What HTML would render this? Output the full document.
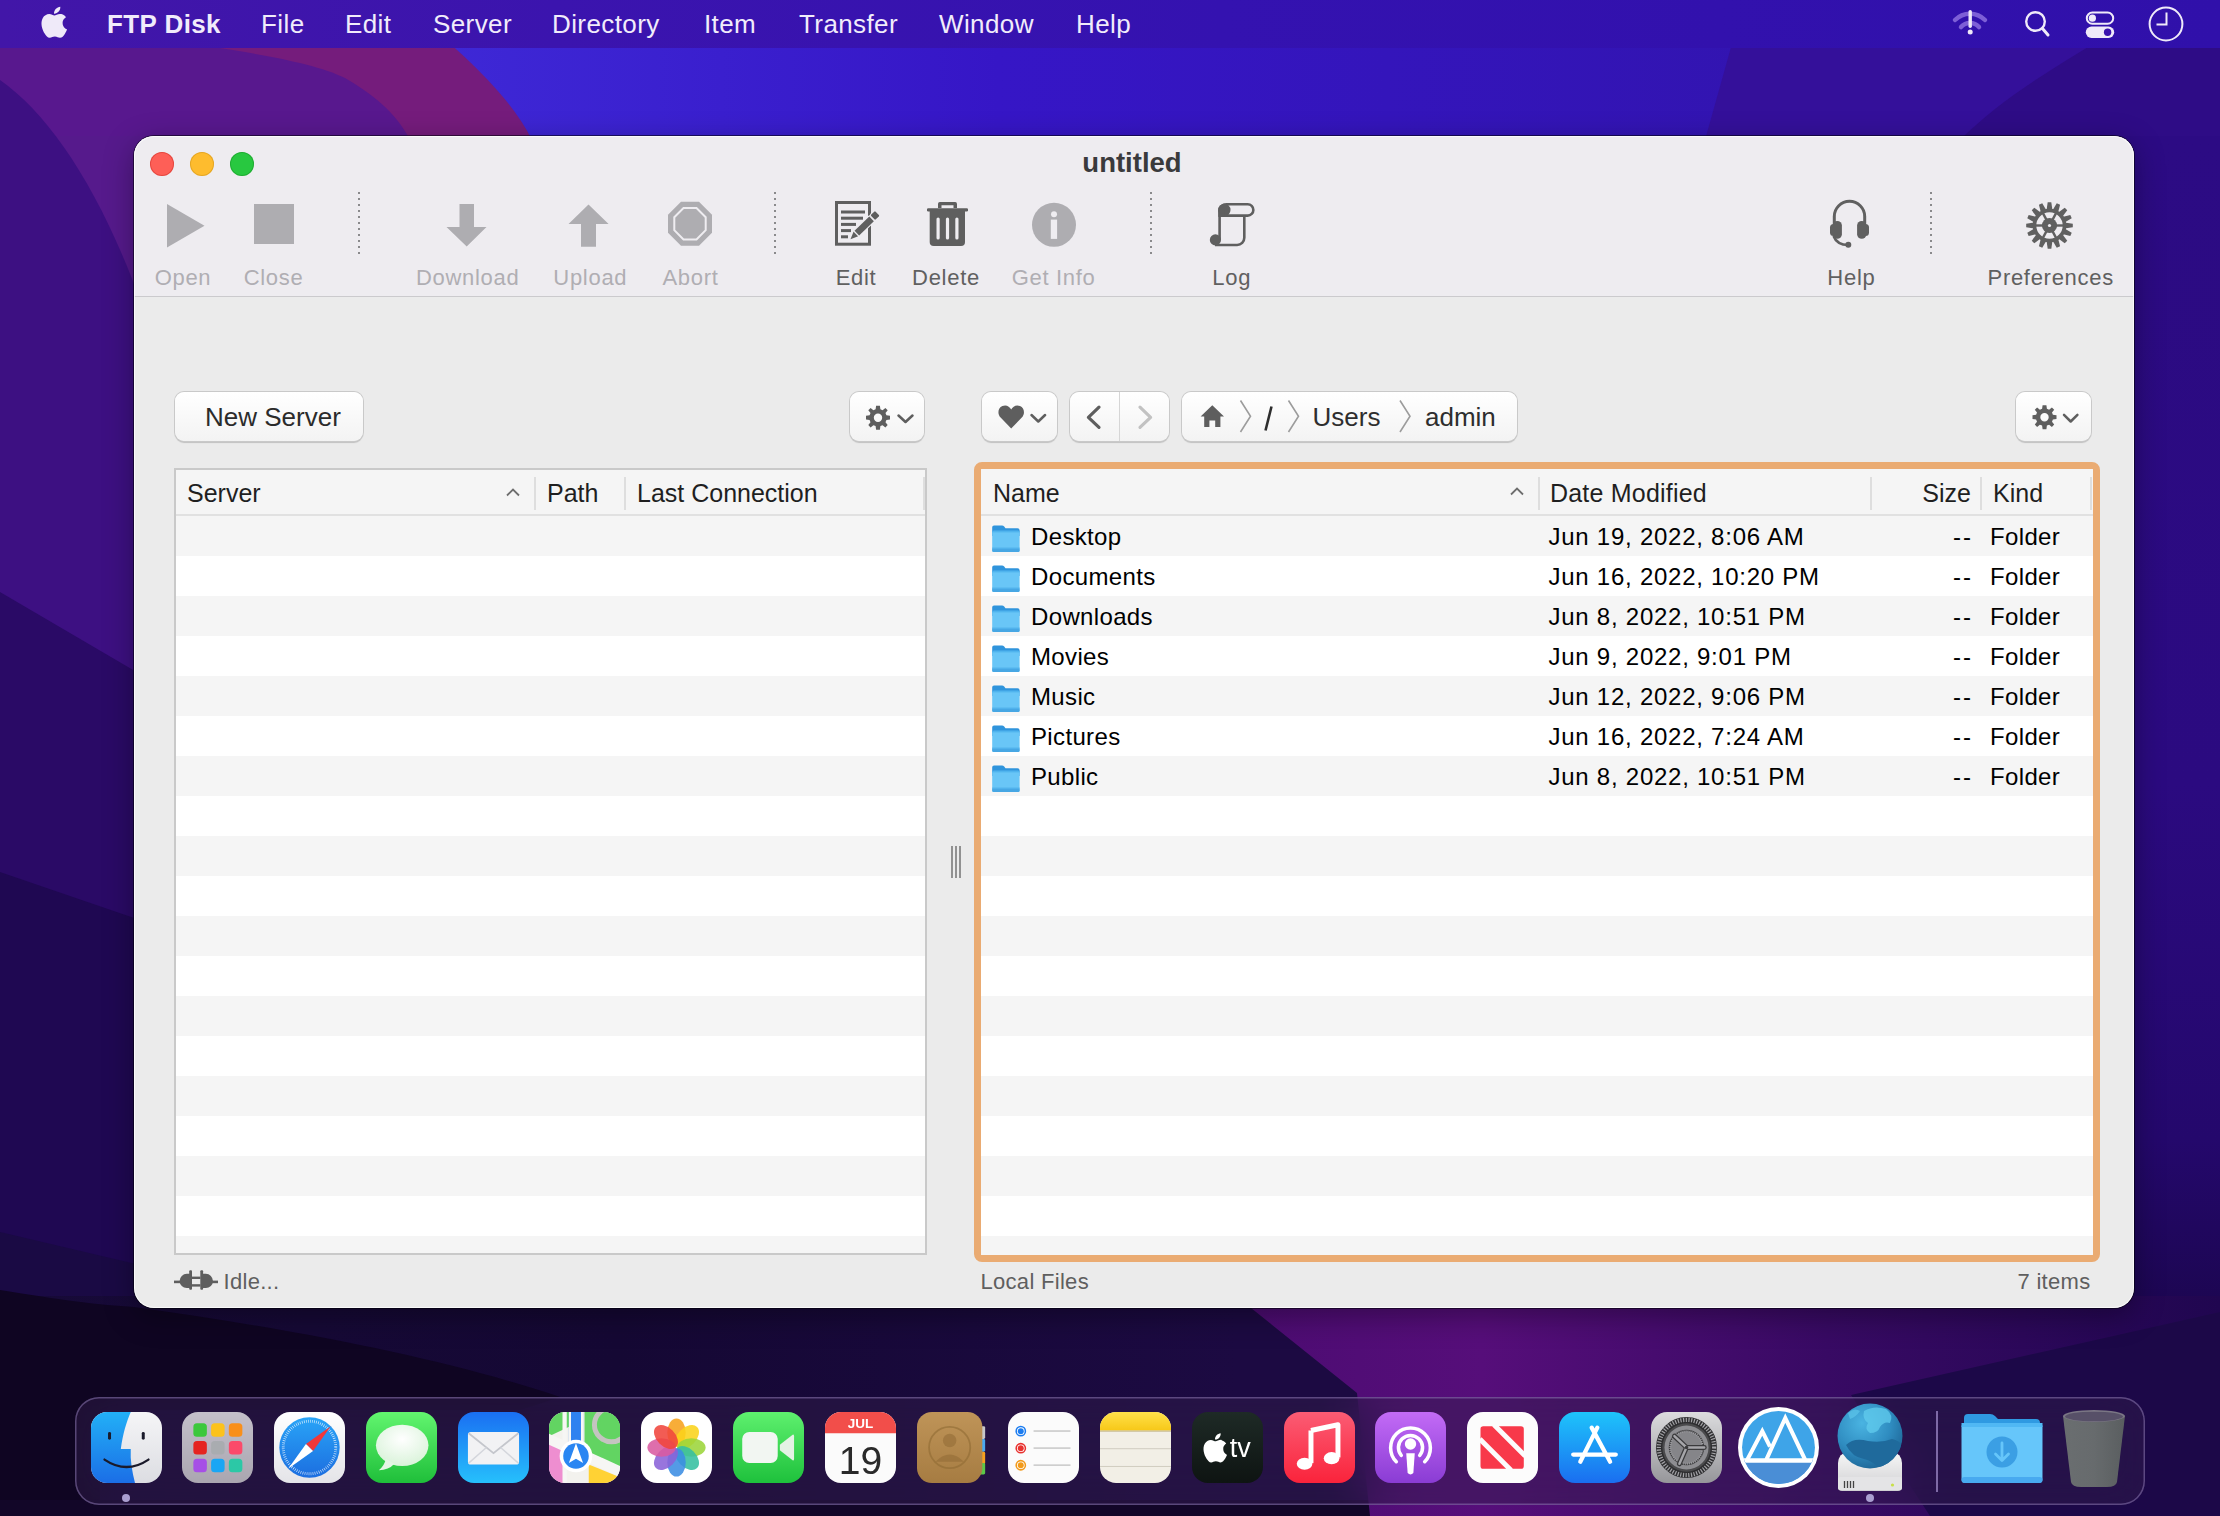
<!DOCTYPE html>
<html><head><meta charset="utf-8">
<style>
*{box-sizing:border-box;margin:0;padding:0}
html,body{width:2220px;height:1516px;overflow:hidden;background:#2a0c80}
body{position:relative;font-family:"Liberation Sans",sans-serif}
.abs{position:absolute}
.t{position:absolute;white-space:nowrap;line-height:1}
#menubar .t{color:#f1ecfb;font-size:26px;top:11px;letter-spacing:.4px}
#win{position:absolute;left:134px;top:136px;width:2000px;height:1172px;border-radius:20px;overflow:hidden;background:#ebebeb;box-shadow:0 0 0 1px rgba(0,0,10,.55),0 8px 30px rgba(0,0,0,.35)}
#tb{position:absolute;left:0;top:0;width:2000px;height:161px;background:#eeecf0;border-bottom:1px solid #cbcacd}
.lbl{position:absolute;top:130.5px;font-size:22px;line-height:1;white-space:nowrap;letter-spacing:.7px;transform:translateX(-50%)}
.dis{color:#b0aeb3}
.en{color:#606060}
.sep{position:absolute;top:56px;width:2px;height:64px;background-image:linear-gradient(#8a8a8c 0,#8a8a8c 2px,transparent 2px,transparent 6px);background-size:2px 6px;background-repeat:repeat-y}
.btn{position:absolute;height:49px;border-radius:9px;background:linear-gradient(#ffffff,#f3f3f3);box-shadow:0 0 0 1px #c9c9c9,0 1.5px 1px rgba(0,0,0,.18)}
.tbl{position:absolute;background:#fff}
.hdr{position:absolute;left:0;top:0;right:0;height:47px;background:#f5f5f5;border-bottom:2px solid #e2e2e2}
.ht{position:absolute;top:11px;font-size:25px;line-height:1;color:#1f1f1f;white-space:nowrap}
.hdiv{position:absolute;top:7px;width:2px;height:33px;background:#dedede}
.caret{position:absolute;top:18px;width:16px;height:10px}
.rt{position:absolute;font-size:24px;line-height:1;color:#000;white-space:nowrap;letter-spacing:.35px}
.dk{position:absolute;top:1412px;width:71px;height:71px;border-radius:16px;overflow:hidden}
</style></head>
<body>
<!-- WALLPAPER -->
<svg class="abs" style="left:0;top:0" width="2220" height="1516" viewBox="0 0 2220 1516">
  <defs>
    <linearGradient id="gBlue" x1="0" y1="0" x2="2220" y2="0" gradientUnits="userSpaceOnUse">
      <stop offset="0.2" stop-color="#3e28d6"/>
      <stop offset="0.45" stop-color="#3616c6"/>
      <stop offset="0.8" stop-color="#3214b0"/>
    </linearGradient>
    <linearGradient id="gLeft" x1="0" y1="136" x2="0" y2="1316" gradientUnits="userSpaceOnUse">
      <stop offset="0" stop-color="#4a148a"/>
      <stop offset=".3" stop-color="#3a1080"/>
      <stop offset=".55" stop-color="#2c0c6a"/>
      <stop offset=".75" stop-color="#1e0848"/>
      <stop offset="1" stop-color="#130529"/>
    </linearGradient>
    <linearGradient id="gRight" x1="0" y1="136" x2="0" y2="1316" gradientUnits="userSpaceOnUse">
      <stop offset="0" stop-color="#2c0b84"/>
      <stop offset=".55" stop-color="#2b0a80"/>
      <stop offset=".85" stop-color="#24086c"/>
      <stop offset="1" stop-color="#1c0650"/>
    </linearGradient>
    <linearGradient id="gMag" x1="1236" y1="0" x2="2220" y2="0" gradientUnits="userSpaceOnUse">
      <stop offset="0" stop-color="#4c0c72"/>
      <stop offset=".25" stop-color="#560e7a"/>
      <stop offset=".6" stop-color="#380a64"/>
      <stop offset="1" stop-color="#200650"/>
    </linearGradient>
    <linearGradient id="gBot" x1="0" y1="0" x2="1236" y2="0" gradientUnits="userSpaceOnUse">
      <stop offset="0" stop-color="#170a38"/>
      <stop offset=".5" stop-color="#150834"/>
      <stop offset="1" stop-color="#1c0a42"/>
    </linearGradient>
  </defs>
  <rect x="0" y="0" width="2220" height="1516" fill="#2c0c84"/>
  <!-- top strip -->
  <rect x="0" y="0" width="2220" height="140" fill="url(#gBlue)"/>
  <path d="M1733 40 L2220 40 L2220 140 L1705 140 Z" fill="#34109a"/>
  <path d="M2100 40 L2220 40 L2220 140 L1960 140 C2000 100 2050 70 2100 40 Z" fill="#2e0c86"/>
  <path d="M0 40 L446 40 C480 70 515 105 532 140 L0 140 Z" fill="#751c7c"/>
  <path d="M0 40 L170 40 C230 50 310 60 345 78 C372 94 396 112 410 140 L0 140 Z" fill="#58188e"/>
  <!-- left strip -->
  <rect x="0" y="136" width="140" height="300" fill="#561a8c"/>
  <path d="M0 80 C50 115 100 190 140 300 L140 1316 L0 1316 Z" fill="#3d1082"/>
  <path d="M0 592 L140 674 V1316 H0 Z" fill="#2a0a66"/>
  <path d="M0 872 L140 920 V1316 H0 Z" fill="#1f0852"/>
  <path d="M0 1232 L140 1265 V1316 H0 Z" fill="#1a0a44"/>
    <!-- right strip -->
  <rect x="2126" y="136" width="94" height="1180" fill="url(#gRight)"/>
  <!-- bottom -->
  <rect x="0" y="1296" width="2220" height="220" fill="#1c0848"/>
  <rect x="0" y="1296" width="1400" height="220" fill="url(#gBot)"/>
  <path d="M0 1290 C60 1300 100 1305 134 1307 C300 1330 450 1360 560 1397 L 520 1410 L100 1410 L100 1516 L0 1516 Z" fill="#0f0522"/>
  <rect x="0" y="1500" width="1380" height="16" fill="#120628"/>
  <path d="M1236 1296 L2220 1296 L2220 1312 L1851 1395 L1930 1516 L1370 1516 L1357 1393 Z" fill="url(#gMag)"/>
</svg>
<!-- MENU BAR -->
<div id="menubar" class="abs" style="left:0;top:0;width:2220px;height:48px;background:linear-gradient(90deg,#4216a8,#3b14ae 25%,#3412b0 55%,#3010aa)">
  <svg class="abs" style="left:38px;top:5px" width="30" height="34" viewBox="0 0 30 34">
    <path fill="#efeaf9" d="M24.6 18.1c0-3.9 3.2-5.8 3.4-5.9-1.8-2.7-4.7-3.1-5.7-3.1-2.4-.2-4.7 1.4-5.9 1.4-1.2 0-3.1-1.4-5.1-1.4C8.6 9.2 6.1 10.7 4.8 13c-2.8 4.8-.7 11.9 2 15.8 1.3 1.9 2.9 4.1 5 4 2-.1 2.7-1.3 5.1-1.3s3.1 1.3 5.1 1.3c2.1 0 3.5-1.9 4.8-3.9 1.5-2.2 2.1-4.3 2.2-4.4-.1 0-4.3-1.6-4.4-6.4zM20.7 6.6c1.1-1.3 1.8-3.1 1.6-4.9-1.6.1-3.5 1.1-4.6 2.4-1 1.1-1.9 3-1.7 4.7 1.8.1 3.6-.9 4.7-2.2z"/>
  </svg>
  <div class="t" style="left:107px;font-weight:bold">FTP Disk</div>
  <div class="t" style="left:261px">File</div>
  <div class="t" style="left:345px">Edit</div>
  <div class="t" style="left:433px">Server</div>
  <div class="t" style="left:552px">Directory</div>
  <div class="t" style="left:704px">Item</div>
  <div class="t" style="left:799px">Transfer</div>
  <div class="t" style="left:939px">Window</div>
  <div class="t" style="left:1076px">Help</div>
  <!-- wifi -->
  <svg class="abs" style="left:1950px;top:6px" width="40" height="34" viewBox="0 0 40 34">
    <path d="M5 14 A21 21 0 0 1 35 14" fill="none" stroke="#7d5fd6" stroke-width="4.5" stroke-linecap="round"/>
    <path d="M11 21 A12 12 0 0 1 29 21" fill="none" stroke="#7d5fd6" stroke-width="4.5" stroke-linecap="round"/>
    <rect x="18.5" y="4" width="3.4" height="18" rx="1.7" fill="#efeaf9"/>
    <circle cx="20.2" cy="26" r="2.5" fill="#efeaf9"/>
  </svg>
  <!-- search -->
  <svg class="abs" style="left:2020px;top:6px" width="34" height="34" viewBox="0 0 34 34">
    <circle cx="15.5" cy="15.5" r="9.3" fill="none" stroke="#efeaf9" stroke-width="2.4"/>
    <path d="M22.5 22.5 L28 29" stroke="#efeaf9" stroke-width="3" stroke-linecap="round"/>
  </svg>
  <!-- control center -->
  <svg class="abs" style="left:2082px;top:8px" width="36" height="34" viewBox="0 0 36 34">
    <rect x="4.8" y="4.6" width="26.4" height="11.2" rx="5.6" fill="none" stroke="#efeaf9" stroke-width="2"/>
    <circle cx="10.4" cy="10.2" r="3.6" fill="#efeaf9"/>
    <rect x="3.8" y="18.6" width="28.4" height="11.4" rx="5.7" fill="#efeaf9"/>
    <circle cx="25.6" cy="24.3" r="3.7" fill="#3a12ae"/>
  </svg>
  <!-- clock -->
  <svg class="abs" style="left:2146px;top:4px" width="40" height="40" viewBox="0 0 40 40">
    <circle cx="20" cy="20" r="16.4" fill="none" stroke="#efeaf9" stroke-width="2"/>
    <path d="M20.5 8.5 V20.5 H10.5" fill="none" stroke="#efeaf9" stroke-width="2"/>
  </svg>
</div>

<!-- WINDOW -->
<div id="win">
  <div id="tb">
    <div class="abs" style="left:16px;top:16px;width:24px;height:24px;border-radius:50%;background:#fe5f57;box-shadow:inset 0 0 0 1px rgba(200,40,30,.45)"></div>
    <div class="abs" style="left:56px;top:16px;width:24px;height:24px;border-radius:50%;background:#febc2e;box-shadow:inset 0 0 0 1px rgba(200,140,20,.45)"></div>
    <div class="abs" style="left:96px;top:16px;width:24px;height:24px;border-radius:50%;background:#28c840;box-shadow:inset 0 0 0 1px rgba(20,140,30,.45)"></div>
    <div class="t" style="left:998px;top:13px;font-size:27.5px;font-weight:bold;color:#3a3a3c;transform:translateX(-50%)">untitled</div>
    <svg class="abs" style="left:0;top:0" width="2000" height="160" viewBox="0 0 2000 160">
      <!-- open -->
      <path d="M33 68 L70.5 89.8 L33 111.5 Z" fill="#aeadb1"/>
      <!-- close -->
      <rect x="120" y="68" width="40" height="40" fill="#aeadb1"/>
      <!-- download -->
      <path d="M325.5 68 H340 V91 H352.5 L332.7 110.5 L312.5 91 H325.5 Z" fill="#aeadb1"/>
      <!-- upload -->
      <path d="M454.5 68.4 L474.6 88 H462 V110.8 H447 V88 H434.5 Z" fill="#aeadb1"/>
      <!-- abort -->
      <path d="M547 65.7 H565 L578 78.7 V96.7 L565 109.7 H547 L534 96.7 V78.7 Z" fill="#aeadb1"/>
      <path d="M549.5 72 H562.5 L571.7 81.2 V94.2 L562.5 103.4 H549.5 L540.3 94.2 V81.2 Z" fill="none" stroke="#efedf1" stroke-width="2"/>
      <!-- edit -->
      <rect x="702.5" y="66.5" width="33" height="41.7" fill="none" stroke="#5f5f5f" stroke-width="3"/>
      <rect x="707" y="74.5" width="24" height="3" fill="#5f5f5f"/>
      <rect x="707" y="80.7" width="22" height="3" fill="#5f5f5f"/>
      <rect x="707" y="86.9" width="15" height="3" fill="#5f5f5f"/>
      <rect x="707" y="93.1" width="10" height="3" fill="#5f5f5f"/>
      <rect x="707" y="99.3" width="7" height="3" fill="#5f5f5f"/>
      <g transform="translate(716.5 103.2) rotate(-44)" fill="#5f5f5f" stroke="#efedf1" stroke-width="2.2" paint-order="stroke">
        <path d="M0 0 L7.5 -3.3 V3.3 Z"/>
        <rect x="8.8" y="-3.3" width="20.5" height="6.6"/>
        <rect x="31" y="-3.3" width="6.2" height="6.6" rx="1"/>
      </g>
      <!-- delete -->
      <path d="M805.8 66 H821.2 Q823 66 823 68 V72 H819.5 V69.2 H807.5 V72 H804 V68 Q804 66 805.8 66 Z" fill="#5f5f5f"/>
      <rect x="793" y="72.2" width="41" height="3.2" rx="1.2" fill="#5f5f5f"/>
      <path d="M795.7 75 H831 V106 Q831 110 827 110 H799.7 Q795.7 110 795.7 106 Z" fill="#5f5f5f"/>
      <rect x="802.5" y="81.5" width="3.2" height="22" rx="1.6" fill="#efedf1"/>
      <rect x="811.9" y="81.5" width="3.2" height="22" rx="1.6" fill="#efedf1"/>
      <rect x="821.3" y="81.5" width="3.2" height="22" rx="1.6" fill="#efedf1"/>
      <!-- get info -->
      <circle cx="920" cy="88.8" r="22" fill="#aeadb1"/>
      <circle cx="920" cy="78.2" r="3" fill="#efedf1"/>
      <rect x="916.8" y="83.6" width="6.3" height="19.3" fill="#efedf1"/>
      <!-- log -->
      <g transform="translate(1074 64)" fill="none" stroke="#5f5f5f" stroke-width="2.6">
        <path d="M11.6 40 V11 A6.7 6.7 0 0 1 18.3 4.3 H39.7 A5.65 5.65 0 0 1 39.7 15.6 H12"/>
        <path d="M36.3 15.5 V37.8 A7.2 7.2 0 0 1 29.1 45 H7"/>
      </g>
      <g transform="translate(1074 64)" fill="#5f5f5f">
        <circle cx="16.3" cy="10" r="6.2"/>
        <rect x="10.3" y="10" width="6" height="6.9"/>
        <circle cx="7.4" cy="39.9" r="5.6"/>
      </g>
      <!-- help headset -->
      <g fill="#606060">
        <path d="M1700.3 88 V80.5 A15.2 15.2 0 0 1 1730.7 80.5 V88" fill="none" stroke="#606060" stroke-width="3"/>
        <rect x="1696" y="88" width="10" height="12" rx="3.5"/>
        <rect x="1698.6" y="85" width="9.3" height="17.8" rx="4.6"/>
        <rect x="1725" y="88" width="10" height="12" rx="3.5"/>
        <rect x="1723.1" y="85" width="9.3" height="17.8" rx="4.6"/>
        <path d="M1699.5 100 Q1703 109 1714.3 109" fill="none" stroke="#606060" stroke-width="2.6"/>
        <circle cx="1714.3" cy="108.8" r="3"/>
      </g>
      <!-- preferences gear -->
      <g transform="translate(1915.5 89.5)" fill="#606060">
        <g id="teeth">
          <path d="M-1.8 -23.3 H1.8 L3 -15 H-3 Z"/>
          <path d="M-1.8 -23.3 H1.8 L3 -15 H-3 Z" transform="rotate(22.5)"/>
          <path d="M-1.8 -23.3 H1.8 L3 -15 H-3 Z" transform="rotate(45)"/>
          <path d="M-1.8 -23.3 H1.8 L3 -15 H-3 Z" transform="rotate(67.5)"/>
          <path d="M-1.8 -23.3 H1.8 L3 -15 H-3 Z" transform="rotate(90)"/>
          <path d="M-1.8 -23.3 H1.8 L3 -15 H-3 Z" transform="rotate(112.5)"/>
          <path d="M-1.8 -23.3 H1.8 L3 -15 H-3 Z" transform="rotate(135)"/>
          <path d="M-1.8 -23.3 H1.8 L3 -15 H-3 Z" transform="rotate(157.5)"/>
          <path d="M-1.8 -23.3 H1.8 L3 -15 H-3 Z" transform="rotate(180)"/>
          <path d="M-1.8 -23.3 H1.8 L3 -15 H-3 Z" transform="rotate(202.5)"/>
          <path d="M-1.8 -23.3 H1.8 L3 -15 H-3 Z" transform="rotate(225)"/>
          <path d="M-1.8 -23.3 H1.8 L3 -15 H-3 Z" transform="rotate(247.5)"/>
          <path d="M-1.8 -23.3 H1.8 L3 -15 H-3 Z" transform="rotate(270)"/>
          <path d="M-1.8 -23.3 H1.8 L3 -15 H-3 Z" transform="rotate(292.5)"/>
          <path d="M-1.8 -23.3 H1.8 L3 -15 H-3 Z" transform="rotate(315)"/>
          <path d="M-1.8 -23.3 H1.8 L3 -15 H-3 Z" transform="rotate(337.5)"/>
        </g>
        <circle r="15" fill="none" stroke="#606060" stroke-width="3.6"/>
        <circle r="7.6"/>
        <rect x="-14" y="-1.2" width="28" height="2.4"/>
        <rect x="-14" y="-1.2" width="28" height="2.4" transform="rotate(62)"/>
        <rect x="-14" y="-1.2" width="28" height="2.4" transform="rotate(-62)"/>
        <circle r="1.6" fill="#efedf1"/>
      </g>
    </svg>
    <div class="sep" style="left:224px"></div>
    <div class="sep" style="left:640px"></div>
    <div class="sep" style="left:1016px"></div>
    <div class="sep" style="left:1796px"></div>
    <div class="lbl dis" style="left:49px">Open</div>
    <div class="lbl dis" style="left:139.5px">Close</div>
    <div class="lbl dis" style="left:333.7px">Download</div>
    <div class="lbl dis" style="left:456.3px">Upload</div>
    <div class="lbl dis" style="left:556.5px">Abort</div>
    <div class="lbl en" style="left:722px">Edit</div>
    <div class="lbl en" style="left:812px">Delete</div>
    <div class="lbl dis" style="left:919.6px">Get Info</div>
    <div class="lbl en" style="left:1097.7px">Log</div>
    <div class="lbl en" style="left:1717.4px">Help</div>
    <div class="lbl en" style="left:1916.7px">Preferences</div>
  </div>
  <svg width="0" height="0" style="position:absolute">
    <defs>
      <g id="fold">
        <path d="M3 1.5 H11 Q12.3 1.5 13.2 2.6 L14.5 4.2 H26.5 Q28.6 4.2 28.6 6.3 V12 H1.2 V3.3 Q1.2 1.5 3 1.5 Z" fill="#2f94dc"/>
        <rect x="1.2" y="6.8" width="27.4" height="21.2" rx="1.6" fill="#69c6f7"/>
        <rect x="1.2" y="6.8" width="27.4" height="1.6" fill="#50b4ee"/>
        <rect x="1.2" y="23.6" width="27.4" height="1.3" fill="#4eb0ea"/>
        <path d="M1.2 25 H28.6 V26.4 Q28.6 28 27 28 H2.8 Q1.2 28 1.2 26.4 Z" fill="#47a7e4"/>
      </g>
      <g id="sgear">
        <path d="M-1.9 -12 H1.9 L2.4 -8.4 L4.6 -7.5 L7.4 -9.7 L9.7 -7.4 L7.5 -4.6 L8.4 -2.4 L12 -1.9 V1.9 L8.4 2.4 L7.5 4.6 L9.7 7.4 L7.4 9.7 L4.6 7.5 L2.4 8.4 L1.9 12 H-1.9 L-2.4 8.4 L-4.6 7.5 L-7.4 9.7 L-9.7 7.4 L-7.5 4.6 L-8.4 2.4 L-12 1.9 V-1.9 L-8.4 -2.4 L-7.5 -4.6 L-9.7 -7.4 L-7.4 -9.7 L-4.6 -7.5 L-2.4 -8.4 Z M0 -4.2 A4.2 4.2 0 1 0 0 4.2 A4.2 4.2 0 1 0 0 -4.2 Z" fill="#5e5e5e" fill-rule="evenodd"/>
      </g>
    </defs>
  </svg>
  <!-- New Server -->
  <div class="btn" style="left:41px;top:255.5px;width:188px">
    <div class="t" style="left:30px;top:12px;font-size:26px;color:#2b2b2b">New Server</div>
  </div>
  <!-- left gear -->
  <div class="btn" style="left:716px;top:256px;width:74px">
    <svg class="abs" style="left:0;top:0" width="74" height="49" viewBox="0 0 74 49">
      <use href="#sgear" transform="translate(28 25.7)"/>
      <path d="M48.5 23.5 L55.5 30 L62.5 23.5" fill="none" stroke="#5e5e5e" stroke-width="2.5" stroke-linecap="round" stroke-linejoin="round"/>
    </svg>
  </div>
  <!-- heart -->
  <div class="btn" style="left:848px;top:256px;width:75px">
    <svg class="abs" style="left:0;top:0" width="75" height="49" viewBox="0 0 75 49">
      <path d="M29.2 36.4 L18.6 25.6 C15.2 22 15.8 16 20.4 14 C24.2 12.4 27.6 14.4 29.2 17.4 C30.8 14.4 34.2 12.4 38 14 C42.6 16 43.2 22 39.8 25.6 Z" fill="#5e5e5e"/>
      <path d="M49.5 23 L56.3 29.5 L63.1 23" fill="none" stroke="#5e5e5e" stroke-width="2.5" stroke-linecap="round" stroke-linejoin="round"/>
    </svg>
  </div>
  <!-- nav -->
  <div class="btn" style="left:935.5px;top:256px;width:99px">
    <div class="abs" style="left:49px;top:0;width:1.5px;height:49px;background:#d6d6d6"></div>
    <svg class="abs" style="left:0;top:0" width="99" height="49" viewBox="0 0 99 49">
      <path d="M29 15.2 L18.4 25.3 L29 35.4" fill="none" stroke="#5e5e5e" stroke-width="3.2" stroke-linecap="round" stroke-linejoin="round"/>
      <path d="M70 15.2 L80.6 25.3 L70 35.4" fill="none" stroke="#c2c2c2" stroke-width="3.2" stroke-linecap="round" stroke-linejoin="round"/>
    </svg>
  </div>
  <!-- path bar -->
  <div class="btn" style="left:1047.5px;top:256px;width:335px">
    <svg class="abs" style="left:0;top:0" width="335" height="49" viewBox="0 0 335 49">
      <path d="M30.3 13.2 L42 24.5 H38.4 V35 H33.2 V28.6 H27.4 V35 H22.2 V24.5 H18.6 Z" fill="#5e5e5e"/>
      <path d="M58.5 8.5 L68.5 24.3 L58.5 40" fill="none" stroke="#9c9c9c" stroke-width="1.6"/>
      <path d="M106.5 8.5 L116.5 24.3 L106.5 40" fill="none" stroke="#9c9c9c" stroke-width="1.6"/>
      <path d="M218 8.5 L228 24.3 L218 40" fill="none" stroke="#9c9c9c" stroke-width="1.6"/>
      <path d="M89.5 14.5 L83.5 38.5" fill="none" stroke="#2e2e2e" stroke-width="2.6"/>
    </svg>
    <div class="t" style="left:131px;top:12px;font-size:26px;color:#2e2e2e">Users</div>
    <div class="t" style="left:243.5px;top:12px;font-size:26px;color:#2e2e2e">admin</div>
  </div>
  <!-- right gear -->
  <div class="btn" style="left:1881.5px;top:256px;width:75px">
    <svg class="abs" style="left:0;top:0" width="75" height="49" viewBox="0 0 75 49">
      <use href="#sgear" transform="translate(28.5 25.2)"/>
      <path d="M48 22.8 L54.7 29.5 L61.4 22.8" fill="none" stroke="#5e5e5e" stroke-width="2.5" stroke-linecap="round" stroke-linejoin="round"/>
    </svg>
  </div>
  <!-- splitter -->
  <div class="abs" style="left:817px;top:710px;width:2px;height:32px;background:#919191"></div>
  <div class="abs" style="left:821px;top:710px;width:2px;height:32px;background:#919191"></div>
  <div class="abs" style="left:825px;top:710px;width:2px;height:32px;background:#919191"></div>
  <!-- status -->
  <svg class="abs" style="left:38px;top:1133px" width="48" height="24" viewBox="0 0 48 24">
    <g fill="#5e5e5e">
      <rect x="2" y="11.6" width="7" height="2.6"/>
      <path d="M18.5 4.8 V19.1 H14.8 A7.15 7.15 0 0 1 14.8 4.8 Z"/>
      <rect x="17.2" y="1.3" width="2.8" height="19.4" rx="1"/>
      <rect x="19.5" y="7.6" width="9" height="2.4"/>
      <rect x="19.5" y="15.2" width="9" height="2.4"/>
      <rect x="28.3" y="1.3" width="2.8" height="19.4" rx="1"/>
      <path d="M30.5 4.8 H33.8 A7.15 7.15 0 0 1 33.8 19.1 H30.5 Z"/>
      <rect x="40" y="11.6" width="6" height="2.6"/>
    </g>
  </svg>
  <div class="t" style="left:89.5px;top:1134.5px;font-size:22px;color:#5f5f5f;letter-spacing:.3px">Idle...</div>
  <div class="t" style="left:846.5px;top:1134.5px;font-size:22px;color:#5f5f5f;letter-spacing:.3px">Local Files</div>
  <div class="t" style="right:43.5px;top:1134.5px;font-size:22px;color:#5f5f5f;letter-spacing:.3px">7 items</div>
<div class="abs" style="left:40px;top:332px;width:753px;height:923px;height:787px;border:2px solid #c9c9c9;background:#fff;overflow:hidden">
<div class="abs" style="left:0;top:46px;width:749px;height:40px;background:#f5f5f5"></div>
<div class="abs" style="left:0;top:86px;width:749px;height:40px;background:#ffffff"></div>
<div class="abs" style="left:0;top:126px;width:749px;height:40px;background:#f5f5f5"></div>
<div class="abs" style="left:0;top:166px;width:749px;height:40px;background:#ffffff"></div>
<div class="abs" style="left:0;top:206px;width:749px;height:40px;background:#f5f5f5"></div>
<div class="abs" style="left:0;top:246px;width:749px;height:40px;background:#ffffff"></div>
<div class="abs" style="left:0;top:286px;width:749px;height:40px;background:#f5f5f5"></div>
<div class="abs" style="left:0;top:326px;width:749px;height:40px;background:#ffffff"></div>
<div class="abs" style="left:0;top:366px;width:749px;height:40px;background:#f5f5f5"></div>
<div class="abs" style="left:0;top:406px;width:749px;height:40px;background:#ffffff"></div>
<div class="abs" style="left:0;top:446px;width:749px;height:40px;background:#f5f5f5"></div>
<div class="abs" style="left:0;top:486px;width:749px;height:40px;background:#ffffff"></div>
<div class="abs" style="left:0;top:526px;width:749px;height:40px;background:#f5f5f5"></div>
<div class="abs" style="left:0;top:566px;width:749px;height:40px;background:#ffffff"></div>
<div class="abs" style="left:0;top:606px;width:749px;height:40px;background:#f5f5f5"></div>
<div class="abs" style="left:0;top:646px;width:749px;height:40px;background:#ffffff"></div>
<div class="abs" style="left:0;top:686px;width:749px;height:40px;background:#f5f5f5"></div>
<div class="abs" style="left:0;top:726px;width:749px;height:40px;background:#ffffff"></div>
<div class="abs" style="left:0;top:766px;width:749px;height:40px;background:#f5f5f5"></div>
<div class="hdr" style="height:46px;border-bottom:2px solid #e1e1e1"></div>
<div class="ht" style="left:11px">Server</div>
<svg class="abs" style="left:328px;top:16px" width="18" height="12" viewBox="0 0 18 12"><path d="M3 9.5 L9 3.5 L15 9.5" fill="none" stroke="#6e6e6e" stroke-width="1.8"/></svg>
<div class="hdiv" style="left:358px"></div>
<div class="ht" style="left:371px">Path</div>
<div class="hdiv" style="left:448px"></div>
<div class="ht" style="left:461px">Last Connection</div>
<div class="hdiv" style="left:747px"></div>
</div>
<div class="abs" style="left:840px;top:326px;width:1126px;height:800px;border:7px solid #eaab72;border-radius:8px;background:#fff;overflow:hidden">
<div class="abs" style="left:0;top:47px;width:1112px;height:40px;background:#f5f5f5"></div>
<div class="abs" style="left:0;top:87px;width:1112px;height:40px;background:#ffffff"></div>
<div class="abs" style="left:0;top:127px;width:1112px;height:40px;background:#f5f5f5"></div>
<div class="abs" style="left:0;top:167px;width:1112px;height:40px;background:#ffffff"></div>
<div class="abs" style="left:0;top:207px;width:1112px;height:40px;background:#f5f5f5"></div>
<div class="abs" style="left:0;top:247px;width:1112px;height:40px;background:#ffffff"></div>
<div class="abs" style="left:0;top:287px;width:1112px;height:40px;background:#f5f5f5"></div>
<div class="abs" style="left:0;top:327px;width:1112px;height:40px;background:#ffffff"></div>
<div class="abs" style="left:0;top:367px;width:1112px;height:40px;background:#f5f5f5"></div>
<div class="abs" style="left:0;top:407px;width:1112px;height:40px;background:#ffffff"></div>
<div class="abs" style="left:0;top:447px;width:1112px;height:40px;background:#f5f5f5"></div>
<div class="abs" style="left:0;top:487px;width:1112px;height:40px;background:#ffffff"></div>
<div class="abs" style="left:0;top:527px;width:1112px;height:40px;background:#f5f5f5"></div>
<div class="abs" style="left:0;top:567px;width:1112px;height:40px;background:#ffffff"></div>
<div class="abs" style="left:0;top:607px;width:1112px;height:40px;background:#f5f5f5"></div>
<div class="abs" style="left:0;top:647px;width:1112px;height:40px;background:#ffffff"></div>
<div class="abs" style="left:0;top:687px;width:1112px;height:40px;background:#f5f5f5"></div>
<div class="abs" style="left:0;top:727px;width:1112px;height:40px;background:#ffffff"></div>
<div class="abs" style="left:0;top:767px;width:1112px;height:40px;background:#f5f5f5"></div>
<div class="hdr" style="height:47px;border-bottom:2px solid #e1e1e1"></div>
<div class="ht" style="left:12px;top:12px">Name</div>
<svg class="abs" style="left:527px;top:16px" width="18" height="12" viewBox="0 0 18 12"><path d="M3 9.5 L9 3.5 L15 9.5" fill="none" stroke="#6e6e6e" stroke-width="1.8"/></svg>
<div class="hdiv" style="left:557px;top:8px"></div>
<div class="ht" style="left:569px;top:12px;letter-spacing:.2px">Date Modified</div>
<div class="hdiv" style="left:889px;top:8px"></div>
<div class="ht" style="right:122px;top:12px">Size</div>
<div class="hdiv" style="left:999px;top:8px"></div>
<div class="ht" style="left:1012px;top:12px">Kind</div>
<div class="hdiv" style="left:1109px;top:8px"></div>
<svg class="abs" style="left:10px;top:55px" width="30" height="29" viewBox="0 0 30 29"><use href="#fold"/></svg>
<div class="rt" style="left:50px;top:56px">Desktop</div>
<div class="rt" style="left:567.5px;top:56px;letter-spacing:.75px">Jun 19, 2022, 8:06 AM</div>
<div class="rt" style="right:120px;letter-spacing:2px;top:56px">--</div>
<div class="rt" style="left:1009px;top:56px">Folder</div>
<svg class="abs" style="left:10px;top:95px" width="30" height="29" viewBox="0 0 30 29"><use href="#fold"/></svg>
<div class="rt" style="left:50px;top:96px">Documents</div>
<div class="rt" style="left:567.5px;top:96px;letter-spacing:.75px">Jun 16, 2022, 10:20 PM</div>
<div class="rt" style="right:120px;letter-spacing:2px;top:96px">--</div>
<div class="rt" style="left:1009px;top:96px">Folder</div>
<svg class="abs" style="left:10px;top:135px" width="30" height="29" viewBox="0 0 30 29"><use href="#fold"/></svg>
<div class="rt" style="left:50px;top:136px">Downloads</div>
<div class="rt" style="left:567.5px;top:136px;letter-spacing:.75px">Jun 8, 2022, 10:51 PM</div>
<div class="rt" style="right:120px;letter-spacing:2px;top:136px">--</div>
<div class="rt" style="left:1009px;top:136px">Folder</div>
<svg class="abs" style="left:10px;top:175px" width="30" height="29" viewBox="0 0 30 29"><use href="#fold"/></svg>
<div class="rt" style="left:50px;top:176px">Movies</div>
<div class="rt" style="left:567.5px;top:176px;letter-spacing:.75px">Jun 9, 2022, 9:01 PM</div>
<div class="rt" style="right:120px;letter-spacing:2px;top:176px">--</div>
<div class="rt" style="left:1009px;top:176px">Folder</div>
<svg class="abs" style="left:10px;top:215px" width="30" height="29" viewBox="0 0 30 29"><use href="#fold"/></svg>
<div class="rt" style="left:50px;top:216px">Music</div>
<div class="rt" style="left:567.5px;top:216px;letter-spacing:.75px">Jun 12, 2022, 9:06 PM</div>
<div class="rt" style="right:120px;letter-spacing:2px;top:216px">--</div>
<div class="rt" style="left:1009px;top:216px">Folder</div>
<svg class="abs" style="left:10px;top:255px" width="30" height="29" viewBox="0 0 30 29"><use href="#fold"/></svg>
<div class="rt" style="left:50px;top:256px">Pictures</div>
<div class="rt" style="left:567.5px;top:256px;letter-spacing:.75px">Jun 16, 2022, 7:24 AM</div>
<div class="rt" style="right:120px;letter-spacing:2px;top:256px">--</div>
<div class="rt" style="left:1009px;top:256px">Folder</div>
<svg class="abs" style="left:10px;top:295px" width="30" height="29" viewBox="0 0 30 29"><use href="#fold"/></svg>
<div class="rt" style="left:50px;top:296px">Public</div>
<div class="rt" style="left:567.5px;top:296px;letter-spacing:.75px">Jun 8, 2022, 10:51 PM</div>
<div class="rt" style="right:120px;letter-spacing:2px;top:296px">--</div>
<div class="rt" style="left:1009px;top:296px">Folder</div>
</div>
<div class="abs" style="left:0;top:0;width:2000px;height:1172px;border-radius:20px;box-shadow:inset 0 0 0 1px rgba(255,255,255,.75);pointer-events:none"></div>
</div>

<!-- DOCK -->
<div id="dock" class="abs" style="left:75px;top:1397px;width:2070px;height:108px;border-radius:24px;background:rgba(50,32,76,.45);backdrop-filter:blur(24px);-webkit-backdrop-filter:blur(24px);box-shadow:inset 0 0 0 1.5px rgba(160,140,200,.45)"></div>
<svg class="abs" style="left:90.5px;top:1412px" width="71" height="71" viewBox="0 0 100 100">
<defs><linearGradient id="fdL" x1="0" y1="0" x2="0" y2="1"><stop offset="0" stop-color="#22b0f7"/><stop offset="1" stop-color="#1b6ee6"/></linearGradient>
<linearGradient id="fdR" x1="0" y1="0" x2="0" y2="1"><stop offset="0" stop-color="#f5f5f7"/><stop offset="1" stop-color="#dcdde2"/></linearGradient>
<clipPath id="fdC"><rect width="100" height="100" rx="22.5"/></clipPath></defs>
<g clip-path="url(#fdC)">
<rect width="100" height="100" fill="url(#fdR)"/>
<path d="M0 0 H56 C50 14 45 30 42 52 H56 C55 68 58 84 62 100 H0 Z" fill="url(#fdL)"/>
</g>
<rect x="24" y="28" width="4.2" height="11" rx="2.1" fill="#1a1a2a"/>
<rect x="71.5" y="28" width="4.2" height="11" rx="2.1" fill="#1a1a2a"/>
<path d="M19 67 Q50 88 81 67" fill="none" stroke="#1a1a2a" stroke-width="3.2" stroke-linecap="round"/>
</svg>
<svg class="abs" style="left:182.3px;top:1412px" width="71" height="71" viewBox="0 0 100 100">
<defs><linearGradient id="lpB" x1="0" y1="0" x2="0" y2="1"><stop offset="0" stop-color="#c4c0ca"/><stop offset="1" stop-color="#aaa6b0"/></linearGradient></defs>
<rect x="0" y="0" width="100" height="100" rx="22.5" fill="url(#lpB)" /><rect x="16" y="16" width="19" height="19" rx="5" fill="#3cc83c"/><rect x="41" y="16" width="19" height="19" rx="5" fill="#fcc21c"/><rect x="66" y="16" width="19" height="19" rx="5" fill="#f98f1a"/><rect x="16" y="41" width="19" height="19" rx="5" fill="#e52420"/><rect x="41" y="41" width="19" height="19" rx="5" fill="#a9acb0"/><rect x="66" y="41" width="19" height="19" rx="5" fill="#fb4a6a"/><rect x="16" y="66" width="19" height="19" rx="5" fill="#a64fe6"/><rect x="41" y="66" width="19" height="19" rx="5" fill="#1aa6f4"/><rect x="66" y="66" width="19" height="19" rx="5" fill="#2cc8a6"/></svg>
<svg class="abs" style="left:274.1px;top:1412px" width="71" height="71" viewBox="0 0 100 100">
<defs><linearGradient id="sfB" x1="0" y1="0" x2="0" y2="1"><stop offset="0" stop-color="#ffffff"/><stop offset="1" stop-color="#e4e4e8"/></linearGradient>
<linearGradient id="sfC" x1="0" y1="0" x2="0" y2="1"><stop offset="0" stop-color="#29a4f7"/><stop offset="1" stop-color="#1c6ee0"/></linearGradient></defs>
<rect x="0" y="0" width="100" height="100" rx="22.5" fill="url(#sfB)" />
<circle cx="50" cy="50" r="42.5" fill="url(#sfC)"/>
<circle cx="50" cy="50" r="37" fill="none" stroke="#ffffff" stroke-width="4" stroke-dasharray="0.9 2.0" opacity=".85"/>
<path d="M80 20 L55 55 L45 45 Z" fill="#f0373a"/>
<path d="M20 80 L45 45 L55 55 Z" fill="#ffffff"/>
</svg>
<svg class="abs" style="left:365.8px;top:1412px" width="71" height="71" viewBox="0 0 100 100">
<defs><linearGradient id="msB" x1="0" y1="0" x2="0" y2="1"><stop offset="0" stop-color="#62f56f"/><stop offset="1" stop-color="#1fbf3a"/></linearGradient>
<radialGradient id="msW" cx=".5" cy=".35" r=".7"><stop offset="0" stop-color="#ffffff"/><stop offset="1" stop-color="#d7f2d7"/></radialGradient></defs>
<rect x="0" y="0" width="100" height="100" rx="22.5" fill="url(#msB)" />
<ellipse cx="51" cy="47" rx="37" ry="29" fill="url(#msW)"/>
<path d="M28 66 Q26 76 18 82 Q32 82 40 73 Z" fill="#e4f6e4"/>
</svg>
<svg class="abs" style="left:457.6px;top:1412px" width="71" height="71" viewBox="0 0 100 100">
<defs><linearGradient id="mlB" x1="0" y1="0" x2="0" y2="1"><stop offset="0" stop-color="#1a6ff2"/><stop offset="1" stop-color="#26c0fc"/></linearGradient></defs>
<rect x="0" y="0" width="100" height="100" rx="22.5" fill="url(#mlB)" />
<rect x="14" y="28" width="72" height="46" rx="4" fill="#f2f2f4"/>
<path d="M15 30 L50 58 L85 30" fill="none" stroke="#c4c6cc" stroke-width="2.5"/>
<path d="M15 72 L40 50 M85 72 L60 50" fill="none" stroke="#d4d6dc" stroke-width="2"/>
</svg>
<svg class="abs" style="left:549.4px;top:1412px" width="71" height="71" viewBox="0 0 100 100">
<defs><clipPath id="mpC"><rect width="100" height="100" rx="22.5"/></clipPath></defs>
<g clip-path="url(#mpC)">
<rect width="100" height="100" fill="#f3f2ee"/>
<path d="M0 0 H30 V20 L0 34 Z" fill="#62d462"/>
<path d="M50 0 H100 V78 L50 54 Z" fill="#62d462"/>
<path d="M0 44 L22 56 V100 H0 Z" fill="#ee8ed0"/>
<path d="M56 74 L100 92 V100 H56 Z" fill="#ffd234"/>
<path d="M-5 36 L105 86" stroke="#f6f6f4" stroke-width="14"/>
<path d="M22 0 V100" stroke="#f6f6f4" stroke-width="6"/>
<rect x="28" y="0" width="20" height="56" fill="#2f82f0"/>
<rect x="28" y="0" width="3" height="56" fill="#f6f6f4"/>
<rect x="45" y="0" width="3" height="56" fill="#f6f6f4"/>
<circle cx="88" cy="18" r="24" fill="none" stroke="#c4c4c0" stroke-width="7"/>
<circle cx="88" cy="18" r="17" fill="#62d462"/>
<circle cx="38" cy="62" r="23" fill="#ffffff"/>
<circle cx="38" cy="62" r="18" fill="#2a86f2"/>
<path d="M38 44 L48 72 L38 66 L28 72 Z" fill="#ffffff"/>
</g></svg>
<svg class="abs" style="left:641.2px;top:1412px" width="71" height="71" viewBox="0 0 100 100"><rect x="0" y="0" width="100" height="100" rx="22.5" fill="#ffffff" /><ellipse cx="50" cy="29" rx="13" ry="20" fill="#f7a21c" opacity=".88" transform="rotate(0 50 50)"/><ellipse cx="50" cy="29" rx="13" ry="20" fill="#fbd31a" opacity=".88" transform="rotate(45 50 50)"/><ellipse cx="50" cy="29" rx="13" ry="20" fill="#9cd53a" opacity=".88" transform="rotate(90 50 50)"/><ellipse cx="50" cy="29" rx="13" ry="20" fill="#35bfa0" opacity=".88" transform="rotate(135 50 50)"/><ellipse cx="50" cy="29" rx="13" ry="20" fill="#3b8de3" opacity=".88" transform="rotate(180 50 50)"/><ellipse cx="50" cy="29" rx="13" ry="20" fill="#8a62d8" opacity=".88" transform="rotate(225 50 50)"/><ellipse cx="50" cy="29" rx="13" ry="20" fill="#d95aa0" opacity=".88" transform="rotate(270 50 50)"/><ellipse cx="50" cy="29" rx="13" ry="20" fill="#f0463c" opacity=".88" transform="rotate(315 50 50)"/></svg>
<svg class="abs" style="left:733.0px;top:1412px" width="71" height="71" viewBox="0 0 100 100">
<defs><linearGradient id="ftB" x1="0" y1="0" x2="0" y2="1"><stop offset="0" stop-color="#5ef06e"/><stop offset="1" stop-color="#1ec13c"/></linearGradient></defs>
<rect x="0" y="0" width="100" height="100" rx="22.5" fill="url(#ftB)" />
<rect x="13" y="28" width="50" height="44" rx="10" fill="#f2f6f2"/>
<path d="M66 46 L84 32 Q86 31 86 34 V66 Q86 69 84 68 L66 54 Z" fill="#e4f2e4"/>
</svg>
<svg class="abs" style="left:824.7px;top:1412px" width="71" height="71" viewBox="0 0 100 100"><rect x="0" y="0" width="100" height="100" rx="22.5" fill="#fbfbfb" />
<path d="M0 22.5 A22.5 22.5 0 0 1 22.5 0 H77.5 A22.5 22.5 0 0 1 100 22.5 V30 H0 Z" fill="#f24e4a"/>
<text x="50" y="23" font-family="Liberation Sans" font-weight="bold" font-size="19" fill="#ffffff" text-anchor="middle">JUL</text>
<text x="50" y="87" font-family="Liberation Sans" font-size="55" fill="#2a2a2a" text-anchor="middle">19</text>
</svg>
<svg class="abs" style="left:916.5px;top:1412px" width="71" height="71" viewBox="0 0 100 100">
<defs><linearGradient id="ctB" x1="0" y1="0" x2="0" y2="1"><stop offset="0" stop-color="#bf9458"/><stop offset="1" stop-color="#a67c42"/></linearGradient></defs>
<rect x="86" y="20" width="10" height="18" rx="2" fill="#c7c7c9"/>
<rect x="86" y="38" width="10" height="18" rx="2" fill="#4aa8f0"/>
<rect x="86" y="56" width="10" height="18" rx="2" fill="#f5a020"/>
<rect x="86" y="72" width="10" height="16" rx="2" fill="#5cc848"/>
<rect x="0" y="0" width="92" height="100" rx="21" fill="url(#ctB)"/>
<circle cx="46" cy="50" r="29" fill="none" stroke="#8f6a34" stroke-width="2.5" opacity=".6"/>
<circle cx="46" cy="40" r="9.5" fill="#8f6a34" opacity=".55"/>
<path d="M26 70 Q46 50 66 70" fill="#8f6a34" opacity=".55"/>
</svg>
<svg class="abs" style="left:1008.3px;top:1412px" width="71" height="71" viewBox="0 0 100 100"><rect x="0" y="0" width="100" height="100" rx="22.5" fill="#fbfbfb" />
<circle cx="18" cy="27" r="6.5" fill="#ffffff" stroke="#1b7cf0" stroke-width="2.2"/><circle cx="18" cy="27" r="4.2" fill="#1b7cf0"/>
<circle cx="18" cy="51" r="6.5" fill="#ffffff" stroke="#e8322f" stroke-width="2.2"/><circle cx="18" cy="51" r="4.2" fill="#e8322f"/>
<circle cx="18" cy="75" r="6.5" fill="#ffffff" stroke="#f29a1a" stroke-width="2.2"/><circle cx="18" cy="75" r="4.2" fill="#f29a1a"/>
<rect x="36" y="26" width="52" height="1.6" fill="#b8b8b8"/>
<rect x="36" y="50" width="52" height="1.6" fill="#b8b8b8"/>
<rect x="36" y="74" width="52" height="1.6" fill="#b8b8b8"/>
</svg>
<svg class="abs" style="left:1100.1px;top:1412px" width="71" height="71" viewBox="0 0 100 100">
<defs><clipPath id="ntC"><rect width="100" height="100" rx="22.5"/></clipPath>
<linearGradient id="ntY" x1="0" y1="0" x2="0" y2="1"><stop offset="0" stop-color="#ffe14a"/><stop offset="1" stop-color="#f7c818"/></linearGradient></defs>
<g clip-path="url(#ntC)">
<rect width="100" height="100" fill="#f2efe6"/>
<rect width="100" height="26" fill="url(#ntY)"/>
<rect y="26" width="100" height="2" fill="#b8a870" opacity=".6"/>
<rect y="51" width="100" height="1.4" fill="#d0ccc0"/>
<rect y="76" width="100" height="1.4" fill="#d0ccc0"/>
</g>
</svg>
<svg class="abs" style="left:1191.9px;top:1412px" width="71" height="71" viewBox="0 0 100 100">
<defs><linearGradient id="tvB" x1="0" y1="0" x2="0" y2="1"><stop offset="0" stop-color="#1e2a26"/><stop offset="1" stop-color="#0e1412"/></linearGradient></defs>
<rect x="0" y="0" width="100" height="100" rx="22.5" fill="url(#tvB)" />
<g transform="translate(10 26) scale(1.35)">
<path d="M23 9.8 C20.6 9.8 18.4 11.3 17.3 11.3 C16.1 11.3 14.3 9.9 12.3 9.9 C9.7 10 7.3 11.5 5.9 13.9 C3.2 18.6 5.2 25.6 7.8 29.4 C9.1 31.3 10.6 33.3 12.6 33.3 C14.5 33.2 15.2 32.1 17.5 32.1 C19.8 32.1 20.5 33.3 22.5 33.3 C24.5 33.2 25.8 31.4 27.1 29.5 C28.5 27.4 29.1 25.4 29.1 25.3 C29.1 25.3 25.2 23.8 25.2 19.3 C25.1 15.6 28.2 13.8 28.3 13.7 C26.5 11.1 23.8 10.8 23 9.8 Z M21 7.5 C22 6.3 22.7 4.6 22.5 2.9 C21 3 19.2 3.9 18.2 5.1 C17.2 6.2 16.4 7.9 16.6 9.5 C18.3 9.7 20 8.7 21 7.5 Z" fill="#ffffff"/>
</g>
<text x="68" y="63" font-family="Liberation Sans" font-size="38" fill="#ffffff" text-anchor="middle">tv</text>
</svg>
<svg class="abs" style="left:1283.6px;top:1412px" width="71" height="71" viewBox="0 0 100 100">
<defs><linearGradient id="muB" x1="0" y1="0" x2="0" y2="1"><stop offset="0" stop-color="#fb5c74"/><stop offset="1" stop-color="#fa233b"/></linearGradient></defs>
<rect x="0" y="0" width="100" height="100" rx="22.5" fill="url(#muB)" />
<path d="M38 26 L76 18 V64" fill="none" stroke="#ffffff" stroke-width="7" stroke-linejoin="round"/>
<path d="M38 26 V72" fill="none" stroke="#ffffff" stroke-width="7"/>
<ellipse cx="29" cy="73" rx="11" ry="8.5" fill="#ffffff"/>
<ellipse cx="67" cy="65" rx="11" ry="8.5" fill="#ffffff"/>
</svg>
<svg class="abs" style="left:1375.4px;top:1412px" width="71" height="71" viewBox="0 0 100 100">
<defs><linearGradient id="pcB" x1="0" y1="0" x2="0" y2="1"><stop offset="0" stop-color="#c36bf6"/><stop offset="1" stop-color="#8a3cd4"/></linearGradient></defs>
<rect x="0" y="0" width="100" height="100" rx="22.5" fill="url(#pcB)" />
<path d="M30 70 A28 28 0 1 1 70 70" fill="none" stroke="#ffffff" stroke-width="5" stroke-linecap="round"/>
<path d="M37 61 A17 17 0 1 1 63 61" fill="none" stroke="#ffffff" stroke-width="5" stroke-linecap="round"/>
<circle cx="50" cy="45" r="8" fill="#ffffff"/>
<path d="M44 58 H56 L54 86 Q50 90 46 86 Z" fill="#ffffff"/>
</svg>
<svg class="abs" style="left:1467.2px;top:1412px" width="71" height="71" viewBox="0 0 100 100"><rect x="0" y="0" width="100" height="100" rx="22.5" fill="#fcfcfc" />
<rect x="19" y="20" width="61" height="60" rx="4" fill="#f8394a"/>
<path d="M38 18 L82 62 M18 38 L62 82" stroke="#fcfcfc" stroke-width="7"/>
</svg>
<svg class="abs" style="left:1559.0px;top:1412px" width="71" height="71" viewBox="0 0 100 100">
<defs><linearGradient id="asB" x1="0" y1="0" x2="0" y2="1"><stop offset="0" stop-color="#1ec4fb"/><stop offset="1" stop-color="#1a6ef0"/></linearGradient></defs>
<rect x="0" y="0" width="100" height="100" rx="22.5" fill="url(#asB)" />
<path d="M54 22 L30 70 M46 22 L72 70 M20 60 H80" fill="none" stroke="#ffffff" stroke-width="6" stroke-linecap="round"/>
</svg>
<svg class="abs" style="left:1650.8px;top:1412px" width="71" height="71" viewBox="0 0 100 100">
<defs><linearGradient id="spB" x1="0" y1="0" x2="0" y2="1"><stop offset="0" stop-color="#dcdcde"/><stop offset="1" stop-color="#96969a"/></linearGradient></defs>
<rect x="0" y="0" width="100" height="100" rx="22.5" fill="url(#spB)" />
<circle cx="50" cy="50" r="43" fill="#2e2e30"/>
<circle cx="50" cy="50" r="39" fill="none" stroke="#a2a2a6" stroke-width="6" stroke-dasharray="1.7 2.1"/>
<circle cx="50" cy="50" r="34" fill="#4a4a4c"/>
<circle cx="50" cy="50" r="31" fill="#8e8e92"/>
<circle cx="50" cy="50" r="25" fill="#3a3a3c"/>
<circle cx="50" cy="50" r="23" fill="#858589" stroke="#a0a0a4" stroke-width="3" stroke-dasharray="1.2 1.6"/>
<g stroke="#3a3a3c" stroke-width="7" stroke-linecap="round"><path d="M50 50 L33 34 M50 50 L75 50 M50 50 L40 73"/></g>
<g stroke="#a6a6aa" stroke-width="3.4" stroke-linecap="round"><path d="M50 50 L33 34 M50 50 L75 50 M50 50 L40 73"/></g>
<circle cx="50" cy="50" r="2.5" fill="#3a3a3c"/>
</svg>
<svg class="abs" style="left:1960px;top:1412px" width="84" height="74" viewBox="0 0 84 74">
<path d="M4 6 Q4 2 8 2 H30 Q33 2 35 4 L38 7 H76 Q80 7 80 11 V20 H4 Z" fill="#2f9ae2"/>
<rect x="1.5" y="11" width="81" height="60" rx="4" fill="#66c6fa"/>
<rect x="1.5" y="11" width="81" height="4" fill="#50b8f4"/>
<rect x="1.5" y="65" width="81" height="6" rx="3" fill="#48aaf0"/>
<circle cx="42" cy="40" r="15.5" fill="#3b9fe4"/>
<path d="M42 31 V48 M35.5 42 L42 48.5 L48.5 42" fill="none" stroke="#66c6fa" stroke-width="2.8" stroke-linecap="round" stroke-linejoin="round"/>
</svg>
<svg class="abs" style="left:2061px;top:1408px" width="66" height="80" viewBox="0 0 66 80">
<defs><linearGradient id="trB" x1="0" y1="0" x2="1" y2="0"><stop offset="0" stop-color="#6a6e70"/><stop offset=".5" stop-color="#676b6d"/><stop offset="1" stop-color="#5a5e60"/></linearGradient></defs>
<path d="M2 8 L10 74 Q11 79 20 79 H46 Q55 79 56 74 L64 8 Z" fill="url(#trB)"/>
<ellipse cx="33" cy="8" rx="31" ry="6" fill="#7a7684"/>
<ellipse cx="33" cy="8.5" rx="29" ry="4.8" fill="#575068"/>
</svg>
<svg class="abs" style="left:1737.5px;top:1406.5px" width="81" height="81" viewBox="0 0 100 100">
<defs><clipPath id="mtC"><circle cx="50" cy="50" r="45"/></clipPath></defs>
<circle cx="50" cy="50" r="50" fill="#ffffff"/>
<g clip-path="url(#mtC)"><rect x="0" y="0" width="100" height="100" fill="#3ea4e8"/>
<rect x="0" y="66" width="100" height="40" fill="#4a8ed6"/>
<path d="M0 66 H100" stroke="#ffffff" stroke-width="5.5"/>
<path d="M11.5 65 L30 30 L39.5 49" fill="none" stroke="#ffffff" stroke-width="5"/>
<path d="M35 65 L58.4 13.6 L82.8 65" fill="none" stroke="#ffffff" stroke-width="5"/>
</g></svg>
<svg class="abs" style="left:1834px;top:1401px" width="72" height="92" viewBox="0 0 72 92">
<defs><radialGradient id="glB" cx=".38" cy=".3" r=".8"><stop offset="0" stop-color="#4ab4e2"/><stop offset=".55" stop-color="#2f8cc0"/><stop offset="1" stop-color="#1a5e8e"/></radialGradient>
<linearGradient id="drB" x1="0" y1="0" x2="0" y2="1"><stop offset="0" stop-color="#f6f6f6"/><stop offset="1" stop-color="#cfcfd2"/></linearGradient>
<clipPath id="glC"><circle cx="36" cy="35" r="32.5"/></clipPath></defs>
<path d="M4 62 Q5 52 12 52 H60 Q67 52 68 62 V86 Q68 90 64 90 H8 Q4 90 4 86 Z" fill="url(#drB)"/>
<rect x="4" y="76" width="64" height="13" rx="2" fill="#e4e4e6"/>
<path d="M10.5 80 V87 M13.5 80 V87 M16.5 80 V87 M19.5 80 V87" stroke="#444" stroke-width="1.3"/>
<circle cx="58.5" cy="84" r="1.6" fill="#c8e048"/>
<circle cx="36" cy="35" r="32.5" fill="url(#glB)"/>
<g clip-path="url(#glC)">
<path d="M12 44 Q20 36 34 40 Q48 42 58 38 Q70 40 72 56 Q66 68 50 72 Q40 60 30 58 Q18 56 12 44 Z" fill="#1f6a9c"/>
<path d="M30 10 Q40 4 52 8 Q60 14 56 22 Q50 20 46 26 Q44 32 36 32 Q30 28 34 22 Q28 18 30 10 Z" fill="#62ccee" opacity=".75"/>
<path d="M14 12 Q20 6 26 10 Q22 16 16 18 Z" fill="#62ccee" opacity=".6"/>
</g>
</svg>
<div class="abs" style="left:1936px;top:1411px;width:2px;height:81px;background:#7e6aa6"></div>
<div class="abs" style="left:122px;top:1494px;width:8px;height:8px;border-radius:50%;background:#aa9ed0"></div>
<div class="abs" style="left:1866px;top:1494px;width:8px;height:8px;border-radius:50%;background:#aa9ed0"></div>
</body></html>
